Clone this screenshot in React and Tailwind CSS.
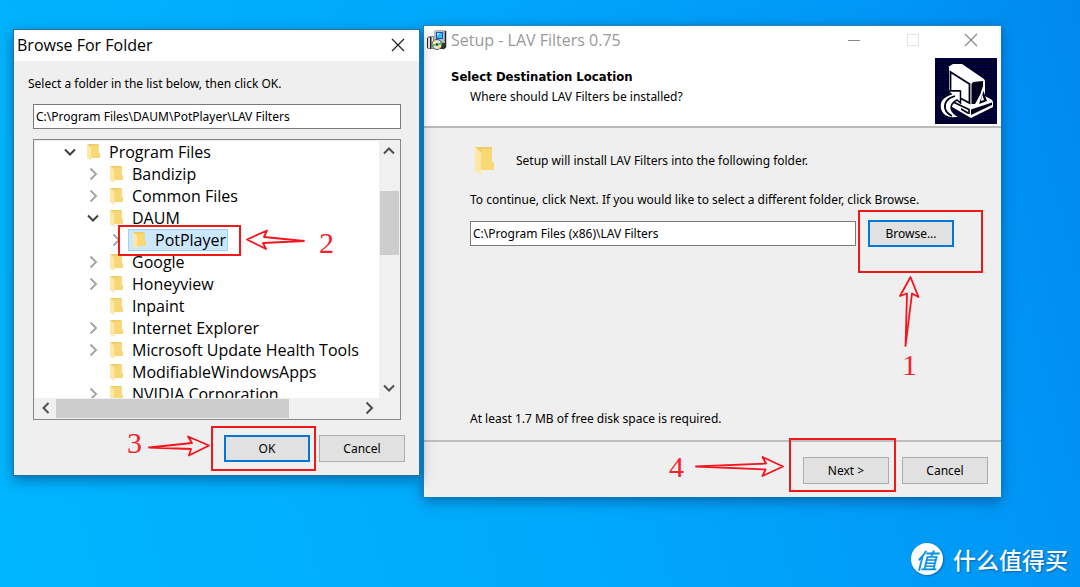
import React from "react";

const UI = "font-['Noto_Sans',sans-serif]";

const FOLDERS = [
  { name: "Program Files", level: 0, state: "open" },
  { name: "Bandizip", level: 1, state: "closed" },
  { name: "Common Files", level: 1, state: "closed" },
  { name: "DAUM", level: 1, state: "open" },
  { name: "PotPlayer", level: 2, state: "closed", selected: true },
  { name: "Google", level: 1, state: "closed" },
  { name: "Honeyview", level: 1, state: "closed" },
  { name: "Inpaint", level: 1, state: "leaf" },
  { name: "Internet Explorer", level: 1, state: "closed" },
  { name: "Microsoft Update Health Tools", level: 1, state: "closed" },
  { name: "ModifiableWindowsApps", level: 1, state: "leaf" },
  { name: "NVIDIA Corporation", level: 1, state: "closed" },
];

const INDENT = ["pl-[27px]", "pl-[50px]", "pl-[73px]"];

function Chevron({ dir, className }) {
  const d = {
    right: "M5.5 2.5 11 8l-5.500 5.500",
    left: "M10.500 3 5.500 8l5 5",
    down: "M3 5.500 8 10.500l5-5",
    up: "M3 10.500 8 5.500l5 5",
  }[dir];
  return (
    <svg viewBox="0 0 16 16" className={`size-4 shrink-0 ${className}`} fill="none" stroke="currentColor" strokeWidth="2" aria-hidden="true">
      <path d={d} />
    </svg>
  );
}

function Folder({ className }) {
  return (
    <svg viewBox="0 0 18 28" preserveAspectRatio="none" className={`shrink-0 ${className}`} aria-hidden="true">
      <path d="M0 0H16V15L18 16V23H4Z" fill="#efcb63" />
      <path d="M6 2H16V15L18 16V23H6Z" fill="#f8d775" />
      <path d="M0 0 5 4.500Q6 5.200 6 7V28L0 23.500Z" fill="#ffe8a4" />
    </svg>
  );
}

function SetupIcon() {
  return (
    <svg viewBox="0 0 20 20" className="size-5 shrink-0" aria-hidden="true">
      <path d="M0 8 2 6H8V19H1L0 18Z" fill="#8b8b8b" />
      <path d="M1 8H3V18H1ZM5 7H6V18H5Z" fill="#e8e8e8" />
      <path d="M3.500 7V19M0.500 8V18" stroke="#222" />
      <path d="M7 1 9 0H18L19 1V11L17 13H8L7 12Z" fill="#b7bcc2" />
      <path d="M18.500 1V17L16 19" stroke="#222" fill="none" strokeWidth="1.500" />
      <path d="M9 2H16V9H9Z" fill="#0a59c8" />
      <path d="M10 3H15V8H10Z" fill="#35b8f4" />
      <path d="M10 3H13L10 6Z" fill="#b5ecff" />
      <path d="M13 13H18V17L16 19H13Z" fill="#333" />
      <circle cx="10" cy="14.500" r="5" fill="#e6e6e6" stroke="#333" strokeWidth="0.800" />
      <path d="M10 14.500 6 12 8 10.200Z" fill="#fff26b" />
      <path d="M10 14.500 14 12 14.500 15Z" fill="#33d14b" />
      <path d="M10 14.500 6 17 5.500 14Z" fill="#45cf5c" />
      <path d="M10 14.500 12 19 14 17Z" fill="#f0e04a" />
      <circle cx="10" cy="14.500" r="1.300" fill="#333" />
    </svg>
  );
}

function WizardLogo() {
  return (
    <svg viewBox="0 0 62 66" className="h-[66px] w-[62px] shrink-0" aria-hidden="true">
      <defs>
        <pattern id="grid" width="3" height="3" patternUnits="userSpaceOnUse">
          <rect width="3" height="3" fill="#00001c" />
          <path d="M0 .5H3M.5 0V3" stroke="#00005a" strokeWidth="0.600" />
        </pattern>
      </defs>
      <rect width="62" height="66" fill="url(#grid)" />
      <path d="M13 9 18 6H27L49 21 50 23V38L57 42 58 44V49L36 60 12 46 14 42V9Z" fill="#fff" />
      <path d="M15.500 14 34.500 26V45L24 39.500V33H15.500Z" fill="#fff" stroke="#00001c" strokeWidth="1.800" />
      <path d="M36.500 26 38 24 48 23V28L45 37 40 46H36.500Z" fill="#00001c" />
      <path d="M48.500 33 52 43 44 46Z" fill="#00001c" />
      <path d="M47 36 49 42 46 43Z" fill="#fff" />
      <path d="M36 51.500 57 44.500V47L36 57Z" fill="#00001c" />
      <path d="M16 43 34 51.500V56" fill="none" stroke="#00001c" strokeWidth="1.700" />
      <path d="M26 50 33 54V56L26 52Z" fill="#00001c" />
      <path d="M12.500 33H25.500V45L22 42Q16 45 16 50 17 56 25 59 14 62 8 56 3 50 6 43 9 38 16 36Z" fill="#fff" stroke="#00001c" strokeWidth="1.500" />
      <path d="M20 38Q9 41 10 50 11 55 17 58" fill="none" stroke="#00001c" strokeWidth="1.800" />
    </svg>
  );
}

function CloseIcon({ className }) {
  return (
    <svg viewBox="0 0 14 14" className={`size-3.5 ${className}`} fill="none" stroke="currentColor" strokeWidth="1.200" aria-hidden="true">
      <path d="M1 1 13 13M13 1 1 13" />
    </svg>
  );
}

function DialogButton({ children, focused }) {
  return (
    <button
      type="button"
      className={`h-[27px] w-[86px] shrink-0 bg-[#e1e1e1] text-center text-xs text-black ${focused ? "border-2 border-[#0078d7]" : "border border-[#adadad]"}`}
    >
      {children}
    </button>
  );
}

function SetupWindow() {
  return (
    <section className="absolute left-[423px] top-[25px] flex h-[472px] w-[578px] flex-col border-l border-t border-[#2b7fb5] bg-[#efefef] shadow-[0_4px_12px_rgba(0,40,90,0.5)]">
      <header className="flex h-7 items-center bg-white pl-[3px] pr-[23px] text-[#999]">
        <SetupIcon />
        <h1 className="ml-1 flex-1 font-['Open_Sans',sans-serif] text-base">Setup - LAV Filters 0.75</h1>
        <div className="flex items-center gap-[45px]">
          <button type="button" aria-label="Minimize" className="flex size-3.5 items-center">
            <span className="h-px w-3 bg-[#888]" />
          </button>
          <button type="button" aria-label="Maximize" disabled className="size-3 border border-[#e4e4e4]" />
          <button type="button" aria-label="Close" className="flex">
            <CloseIcon className="text-[#888]" />
          </button>
        </div>
      </header>
      <div className="flex h-[74px] items-start justify-between border-b-2 border-[#b9b9b9] bg-white pl-[27px] pr-1 pt-1">
        <div className="pt-[9px] text-xs leading-5">
          <h2 className="font-['DejaVu_Sans_Condensed','DejaVu_Sans',sans-serif] text-[13px] font-bold leading-5">Select Destination Location</h2>
          <p className="pl-[19px]">Where should LAV Filters be installed?</p>
        </div>
        <WizardLogo />
      </div>
      <div className="flex flex-1 flex-col pb-[11px] pl-[46px] pr-[47px] pt-[19px] text-xs leading-5">
        <div className="flex h-7 items-center gap-[22px] pl-[5px]">
          <Folder className="h-7 w-[19px]" />
          <p>Setup will install LAV Filters into the following folder.</p>
        </div>
        <label htmlFor="destination" className="mt-[15px]">
          To continue, click Next. If you would like to select a different folder, click Browse.
        </label>
        <div className="mt-2.5 flex items-center gap-3">
          <input id="destination" type="text" defaultValue="C:\Program Files (x86)\LAV Filters" className="h-[25px] min-w-0 flex-1 border border-[#7a7a7a] bg-white px-0.5 text-xs outline-none" />
          <DialogButton focused>Browse...</DialogButton>
        </div>
        <p className="mt-auto">At least 1.7 MB of free disk space is required.</p>
      </div>
      <footer className="flex justify-end gap-[13px] border-t-2 border-[#bdbdbd] pb-[13px] pr-[13px] pt-[15px]">
        <DialogButton>Next &gt;</DialogButton>
        <DialogButton>Cancel</DialogButton>
      </footer>
    </section>
  );
}

function TreeRow({ name, level, state, selected }) {
  return (
    <li className={`flex h-[22px] items-center gap-1 ${INDENT[level]}`}>
      {state === "leaf" ? (
        <span className="size-4 shrink-0" />
      ) : (
        <Chevron dir={state === "open" ? "down" : "right"} className={state === "open" ? "text-[#404040]" : "text-[#a6a6a6]"} />
      )}
      <button
        type="button"
        className={`flex h-[22px] items-center gap-[9px] whitespace-nowrap border pl-1 pr-px ${selected ? "border-[#99d1ff] bg-[#cce8ff]" : "border-transparent"}`}
      >
        <Folder className="h-[17px] w-[13px]" />
        <span>{name}</span>
      </button>
    </li>
  );
}

function BrowseWindow() {
  return (
    <section className="absolute left-[13px] top-[29px] w-[407px] border border-[#2b6f9e] bg-[#efefef] shadow-[0_4px_12px_rgba(0,40,90,0.5)]">
      <header className="flex h-[31px] items-center justify-between bg-white pb-0.5 pl-[3px] pr-3.5">
        <h1 className="font-['Open_Sans',sans-serif] text-base">Browse For Folder</h1>
        <button type="button" aria-label="Close" className="flex">
          <CloseIcon className="text-[#222]" />
        </button>
      </header>
      <div className="flex flex-col pb-[13px] pl-[19px] pr-[18px] pt-[13px] text-xs">
        <label htmlFor="folder" className="-ml-[5px] leading-5">
          Select a folder in the list below, then click OK.
        </label>
        <input id="folder" type="text" defaultValue="C:\Program Files\DAUM\PotPlayer\LAV Filters" className="mt-2.5 h-[25px] border border-[#7a7a7a] bg-white px-0.5 text-xs outline-none" />
        <div className="mt-2.5 grid h-[281px] grid-cols-[1fr_20px] grid-rows-[1fr_20px] border border-[#828790] bg-[#f0f0f0] p-px">
          <ul className="overflow-hidden bg-white font-['Open_Sans',sans-serif] text-base leading-5">
            {FOLDERS.map((f) => (
              <TreeRow key={f.name} {...f} />
            ))}
          </ul>
          <div className="flex flex-col items-center">
            <button type="button" aria-label="Scroll up" className="flex h-5 items-center">
              <Chevron dir="up" className="text-[#505050]" />
            </button>
            <div className="mt-[30px] h-16 w-[19px] bg-[#cdcdcd]" />
            <button type="button" aria-label="Scroll down" className="mt-auto flex h-5 items-center">
              <Chevron dir="down" className="text-[#505050]" />
            </button>
          </div>
          <div className="flex items-center">
            <button type="button" aria-label="Scroll left" className="flex w-[21px] justify-center">
              <Chevron dir="left" className="text-[#505050]" />
            </button>
            <div className="h-[19px] w-[233px] bg-[#cdcdcd]" />
            <button type="button" aria-label="Scroll right" className="ml-auto flex w-[21px] justify-center">
              <Chevron dir="right" className="text-[#505050]" />
            </button>
          </div>
        </div>
        <div className="-mr-1 mt-[15px] flex justify-end gap-[9px]">
          <DialogButton focused>OK</DialogButton>
          <DialogButton>Cancel</DialogButton>
        </div>
      </div>
    </section>
  );
}

function Annotations() {
  const box = "absolute border-2 border-[#f01818]";
  const num = "absolute font-['Liberation_Serif',serif] text-[30px] leading-8 text-[#f5222d]";
  return (
    <div className="pointer-events-none absolute inset-0">
      <div className={`${box} left-[858px] top-[210px] h-[63px] w-[125px]`} />
      <div className={`${box} left-[118px] top-[225px] h-[31px] w-[123px]`} />
      <div className={`${box} left-[211px] top-[426px] h-[45px] w-[105px]`} />
      <div className={`${box} left-[789px] top-[438px] h-[54px] w-[107px]`} />
      <svg viewBox="0 0 1080 587" className="absolute left-0 top-0 h-[587px] w-[1080px]" fill="none" stroke="#f5141e" strokeWidth="1.800" strokeLinejoin="round" aria-hidden="true">
        <path d="M910.500 277 900 296 907 293.500 905.500 346 912 293.500 918.500 297Z" />
        <path d="M247 239.500 267 230.500 264 237 304 241 263 243 266 249Z" />
        <path d="M209 445.500 188 436.500 192 443 149 447.500 191 449 189 455.500Z" />
        <path d="M783 466.500 762.500 457 766 463.500 696 466.500 765.500 469.500 762.500 476Z" />
      </svg>
      <span className={`${num} left-[902px] top-[349px]`}>1</span>
      <span className={`${num} left-[319px] top-[227px]`}>2</span>
      <span className={`${num} left-[127px] top-[427px]`}>3</span>
      <span className={`${num} left-[669px] top-[451px]`}>4</span>
    </div>
  );
}

function Watermark() {
  return (
    <div className="absolute bottom-3 right-3 flex items-center gap-2.5 font-['Noto_Sans_CJK_SC',sans-serif] text-white">
      <span className="flex size-8 items-center justify-center rounded-full bg-white pr-0.5 text-[22px] font-medium italic leading-8 text-[#0a94e6] shadow-[1px_1px_2px_rgba(0,60,120,0.5)]">值</span>
      <span className="text-[23px] font-medium leading-8 [text-shadow:1px_1px_2px_rgba(0,60,120,0.6)]">什么值得买</span>
    </div>
  );
}

export default function App() {
  return (
    <main className={`relative min-h-screen overflow-hidden bg-[linear-gradient(75deg,#00b6ff_0%,#00a8fb_50%,#0096f6_85%,#0088ee_100%)] text-black ${UI}`}>
      <SetupWindow />
      <BrowseWindow />
      <Annotations />
      <Watermark />
    </main>
  );
}
